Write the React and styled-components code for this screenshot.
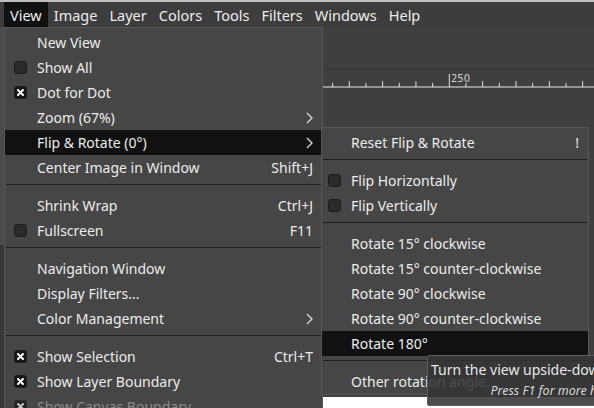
import React from "react";
import styled, { createGlobalStyle, css } from "styled-components";

const GlobalStyle = createGlobalStyle`
  html, body {
    margin: 0;
    padding: 0;
    background: #3f3f3f;
    overflow: hidden;
  }
  body {
    font-family: "Noto Sans", "DejaVu Sans", sans-serif;
    font-size: 14px;
    color: #ececec;
  }
`;

const Screen = styled.div`
  position: relative;
  width: 594px;
  height: 408px;
  overflow: hidden;
  display: flex;
  flex-direction: column;
  background: #3f3f3f;
`;

const TopStrip = styled.div`
  height: 2px;
  background: #bdbdbd;
`;

const MenuBar = styled.div`
  display: flex;
  height: 25px;
  padding-left: 4px;
  background: #3d3d3d;
`;

const BarItem = styled.div`
  display: flex;
  align-items: center;
  padding: 0 6px;
  font-size: 14.5px;
  color: #ececec;
  ${({ $open }) => $open && css`background: #111111;`}
`;

const Workspace = styled.div`
  flex: 1;
  display: flex;
`;

const LeftDock = styled.div`
  width: 4px;
  background: linear-gradient(to bottom, #4a4a4a 0 218px, #383838 218px);
  border-right: 1px solid #5a5a5a;
`;

const Main = styled.div`
  flex: 1;
  display: flex;
  flex-direction: column;
`;

const TopArea = styled.div`
  height: 42px;
  border-bottom: 1px solid #333;
`;

const RulerBox = styled.div`
  height: 18px;
`;

const Gap = styled.div`
  flex: 1;
`;

const Canvas = styled.div`
  height: 11px;
  background: #ffffff;
`;

const MenuPanel = styled.div`
  position: absolute;
  left: ${({ $left }) => $left}px;
  top: ${({ $top }) => $top}px;
  width: ${({ $width }) => $width}px;
  padding-top: 2px;
  background: #464646;
  border: 1px solid #575757;
  box-sizing: border-box;
`;

const Item = styled.div`
  display: flex;
  align-items: center;
  height: 25px;
  padding-right: 9px;
  white-space: nowrap;
  color: ${({ $disabled }) => ($disabled ? "#8c8c8c" : "#ececec")};
  ${({ $active }) => $active && css`background: #111111;`}
`;

const Indicator = styled.span`
  width: ${({ $indent }) => $indent}px;
  flex: none;
  display: flex;
  align-items: center;
  padding-left: ${({ $indent }) => $indent - 23}px;
  box-sizing: border-box;
`;

const Box = styled.span`
  width: 13px;
  height: 13px;
  box-sizing: border-box;
  border-radius: 3px;
  border: 1px solid #1d1d1d;
  background: ${({ $checked }) => ($checked ? "#151515" : "#2a2a2a")};
  display: flex;
  align-items: center;
  justify-content: center;
  opacity: ${({ $disabled }) => ($disabled ? 0.7 : 1)};
`;

const Label = styled.span`
  flex: 1;
`;

const Accel = styled.span`
  color: #ececec;
`;

const Separator = styled.div`
  height: 1px;
  margin: 4px 1px 8px;
  background: #1e1e1e;
`;

const Tooltip = styled.div`
  position: absolute;
  left: 427px;
  top: 355px;
  width: 183px;
  padding: 3px 8px 4px 3px;
  background: rgba(52, 52, 52, 0.88);
  border: 1px solid #5c5c5c;
  border-radius: 2px;
  display: flex;
  flex-direction: column;
  white-space: nowrap;
`;

const TipText = styled.div`
  font-size: 14px;
  line-height: 22px;
  color: #e8e8e8;
`;

const TipHelp = styled.div`
  align-self: flex-end;
  font-size: 12.5px;
  font-style: italic;
  line-height: 20px;
  color: #d8d8d8;
`;

const Chevron = () => (
  <svg width="7" height="12" viewBox="0 0 7 12">
    <polyline points="1,1 6,6 1,11" fill="none" stroke="#dcdcdc" strokeWidth="1.3" />
  </svg>
);

const Cross = () => (
  <svg width="9" height="9" viewBox="0 0 9 9">
    <path d="M2 2 L7 7 M7 2 L2 7" stroke="#ffffff" strokeWidth="2" strokeLinecap="round" />
  </svg>
);

const Ruler = () => {
  const ticks = [];
  for (let k = -26; k <= 9; k++) {
    const x = 449.3 + k * 16.67 - 5;
    if (x < 0 || x > 594) continue;
    const h = k === 0 ? 13 : k % 2 === 0 ? 6 : 4;
    ticks.push(<line key={k} x1={x} x2={x} y1={17 - h} y2={17} stroke="#e0e0e0" strokeWidth="1" />);
  }
  return (
    <svg width="589" height="18" viewBox="0 0 589 18">
      {ticks}
      <line x1="0" x2="589" y1="17" y2="17" stroke="#e8e8e8" strokeWidth="1" />
      <text x="446" y="12" fontSize="10" fill="#d0d0d0" fontFamily="DejaVu Sans, sans-serif">250</text>
    </svg>
  );
};

const viewMenu = [
  { label: "New View" },
  { label: "Show All", check: false },
  { label: "Dot for Dot", check: true },
  { label: "Zoom (67%)", sub: true },
  { label: "Flip & Rotate (0°)", sub: true, active: true },
  { label: "Center Image in Window", accel: "Shift+J" },
  { sep: true },
  { label: "Shrink Wrap", accel: "Ctrl+J" },
  { label: "Fullscreen", check: false, accel: "F11" },
  { sep: true },
  { label: "Navigation Window" },
  { label: "Display Filters..." },
  { label: "Color Management", sub: true },
  { sep: true },
  { label: "Show Selection", check: true, accel: "Ctrl+T" },
  { label: "Show Layer Boundary", check: true },
  { label: "Show Canvas Boundary", check: true, disabled: true },
];

const flipMenu = [
  { label: "Reset Flip & Rotate", accel: "!" },
  { sep: true },
  { label: "Flip Horizontally", check: false },
  { label: "Flip Vertically", check: false },
  { sep: true },
  { label: "Rotate 15° clockwise" },
  { label: "Rotate 15° counter-clockwise" },
  { label: "Rotate 90° clockwise" },
  { label: "Rotate 90° counter-clockwise" },
  { label: "Rotate 180°", active: true },
  { sep: true },
  { label: "Other rotation angle..." },
];

const Menu = ({ items, left, top, width, indent }) => (
  <MenuPanel $left={left} $top={top} $width={width}>
    {items.map((it, i) =>
      it.sep ? (
        <Separator key={i} />
      ) : (
        <Item key={i} $active={it.active} $disabled={it.disabled}>
          <Indicator $indent={indent}>
            {it.check !== undefined && (
              <Box $checked={it.check} $disabled={it.disabled}>
                {it.check && <Cross />}
              </Box>
            )}
          </Indicator>
          <Label>{it.label}</Label>
          {it.accel && <Accel>{it.accel}</Accel>}
          {it.sub && <Chevron />}
        </Item>
      )
    )}
  </MenuPanel>
);

const barItems = ["View", "Image", "Layer", "Colors", "Tools", "Filters", "Windows", "Help"];

export default function App() {
  return (
    <>
      <GlobalStyle />
      <Screen>
        <TopStrip />
        <MenuBar>
          {barItems.map((b, i) => (
            <BarItem key={b} $open={i === 0}>{b}</BarItem>
          ))}
        </MenuBar>
        <Workspace>
          <LeftDock />
          <Main>
            <TopArea />
            <RulerBox>
              <Ruler />
            </RulerBox>
            <Gap />
            <Canvas />
          </Main>
        </Workspace>

        <Menu items={viewMenu} left={4} top={27} width={319} indent={32} />
        <Menu items={flipMenu} left={321} top={127} width={268} indent={29} />

        <Tooltip>
          <TipText>Turn the view upside-down</TipText>
          <TipHelp>Press F1 for more help</TipHelp>
        </Tooltip>
      </Screen>
    </>
  );
}
